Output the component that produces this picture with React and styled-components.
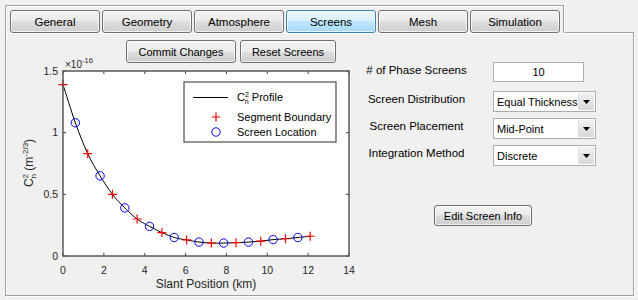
import React from "react";
import styled, { createGlobalStyle, css } from "styled-components";

const GlobalStyle = createGlobalStyle`
  html, body {
    margin: 0;
    padding: 0;
    background: #f0f0f0;
  }
  body {
    font-family: "Liberation Sans", Arial, sans-serif;
  }
`;

// profile samples, every 0.605 km (even = segment boundary, odd = screen)
const STEP = 0.605;
const PROFILE = [
  1.39, 1.08, 0.83, 0.65, 0.5, 0.39, 0.3, 0.24, 0.19, 0.15, 0.13,
  0.113, 0.105, 0.105, 0.108, 0.113, 0.12, 0.133, 0.14, 0.15, 0.16,
];

const AX = { left: 63, right: 349, top: 71, bottom: 256 };
const px = (km) => AX.left + (km * (AX.right - AX.left)) / 14;
const py = (v) => AX.bottom - (v * (AX.bottom - AX.top)) / 1.5;

const pts = PROFILE.map((v, i) => [px(i * STEP), py(v)]);

const curvePath = () => {
  let d = `M${pts[0][0]},${pts[0][1]}`;
  for (let i = 0; i < pts.length - 1; i++) {
    const p0 = pts[Math.max(i - 1, 0)];
    const p1 = pts[i];
    const p2 = pts[i + 1];
    const p3 = pts[Math.min(i + 2, pts.length - 1)];
    const c1x = p1[0] + (p2[0] - p0[0]) / 6;
    const c1y = p1[1] + (p2[1] - p0[1]) / 6;
    const c2x = p2[0] - (p3[0] - p1[0]) / 6;
    const c2y = p2[1] - (p3[1] - p1[1]) / 6;
    d += ` C${c1x},${c1y} ${c2x},${c2y} ${p2[0]},${p2[1]}`;
  }
  return d;
};

const Plus = ({ x, y }) => (
  <path d={`M${x - 4.5},${y} H${x + 4.5} M${x},${y - 4.5} V${y + 4.5}`} stroke="#ff0000" strokeWidth="1.2" />
);

const Ring = ({ x, y }) => (
  <circle cx={x} cy={y} r="4.2" fill="none" stroke="#0000ff" strokeWidth="1" />
);

const ProfileChart = () => {
  const xTicks = [0, 2, 4, 6, 8, 10, 12, 14];
  const yTicks = [0, 0.5, 1, 1.5];
  return (
    <ChartSvg width="354" height="231" viewBox="6 63 354 231">
      <rect x={AX.left} y={AX.top} width={AX.right - AX.left} height={AX.bottom - AX.top} fill="#fff" />
      <path d={curvePath()} fill="none" stroke="#000" strokeWidth="1" />
      {pts.map(([x, y], i) => (i % 2 === 0 ? <Plus key={i} x={x} y={y} /> : <Ring key={i} x={x} y={y} />))}

      {xTicks.map((t) => (
        <g key={t}>
          <path d={`M${px(t)},${AX.bottom} v-3 M${px(t)},${AX.top} v3`} stroke="#404040" strokeWidth="1" />
          <text x={px(t)} y="274" textAnchor="middle" fontSize="10.5" fill="#262626">{t}</text>
        </g>
      ))}
      {yTicks.map((t) => (
        <g key={t}>
          <path d={`M${AX.left},${py(t)} h3 M${AX.right},${py(t)} h-3`} stroke="#404040" strokeWidth="1" />
          <text x="58" y={py(t) + 3.5} textAnchor="end" fontSize="10.5" fill="#262626">{t}</text>
        </g>
      ))}
      <rect x={AX.left} y={AX.top} width={AX.right - AX.left} height={AX.bottom - AX.top} fill="none" stroke="#5a5a5a" strokeWidth="1.5" />

      <text x="65" y="68" fontSize="10" fill="#262626">
        ×10<tspan dy="-5" fontSize="7.5">-16</tspan>
      </text>

      <text transform="translate(33,163) rotate(-90)" textAnchor="middle" fontSize="12" fill="#262626">
        C<tspan dy="-5" fontSize="8">2</tspan><tspan dx="-4.5" dy="8" fontSize="8">n</tspan>
        <tspan dy="-3"> (m</tspan><tspan dy="-5" fontSize="8">-2/3</tspan><tspan dy="5">)</tspan>
      </text>

      <text x="206" y="288" textAnchor="middle" fontSize="12" fill="#262626">Slant Position (km)</text>

      <rect x="184" y="82" width="152" height="60" fill="#fff" stroke="#5a5a5a" strokeWidth="1.3" />
      <path d="M193,97.5 H228" stroke="#000" strokeWidth="1" />
      <text x="237" y="101" fontSize="11" fill="#000">
        C<tspan dy="-4" fontSize="7">2</tspan><tspan dx="-4" dy="7" fontSize="7">n</tspan>
        <tspan dy="-3"> Profile</tspan>
      </text>
      <Plus x={216} y={117} />
      <text x="237" y="121" fontSize="11" fill="#000">Segment Boundary</text>
      <Ring x={216} y={132} />
      <text x="237" y="136" fontSize="11" fill="#000">Screen Location</text>
    </ChartSvg>
  );
};

const TABS = ["General", "Geometry", "Atmosphere", "Screens", "Mesh", "Simulation"];

const FIELDS = [
  { label: "# of Phase Screens", kind: "input", value: "10", gap: 29 },
  { label: "Screen Distribution", kind: "select", value: "Equal Thickness", gap: 9 },
  { label: "Screen Placement", kind: "select", value: "Mid-Point", gap: 6 },
  { label: "Integration Method", kind: "select", value: "Discrete", gap: 6 },
];

const App = () => (
  <>
    <GlobalStyle />
    <Window>
      <TabBar>
        {TABS.map((t) => (
          <Tab key={t} $active={t === "Screens"}>{t}</Tab>
        ))}
      </TabBar>
      <Panel>
        <LeftCol>
          <ButtonRow>
            <PushButton $w={110}>Commit Changes</PushButton>
            <PushButton $w={96}>Reset Screens</PushButton>
          </ButtonRow>
          <ProfileChart />
        </LeftCol>
        <RightCol>
          {FIELDS.map((f) => (
            <FormRow key={f.label} $gap={f.gap}>
              <FieldLabel>{f.label}</FieldLabel>
              {f.kind === "input" ? (
                <TextBox>{f.value}</TextBox>
              ) : (
                <Select>
                  <SelectText>{f.value}</SelectText>
                  <DropButton>
                    <svg width="7" height="4" viewBox="0 0 7 4">
                      <path d="M0,0 H7 L3.5,4 Z" fill="#000" />
                    </svg>
                  </DropButton>
                </Select>
              )}
            </FormRow>
          ))}
          <EditRow>
            <PushButton $w={98} $h={21}>Edit Screen Info</PushButton>
          </EditRow>
        </RightCol>
      </Panel>
    </Window>
  </>
);

const etched = css`
  border: 1px solid #a0a0a0;
  box-shadow: inset 1px 1px 0 #fff, 1px 1px 0 #fff;
`;

const Window = styled.div`
  width: 638px;
  height: 300px;
  padding: 5px 0 0 5px;
  box-sizing: border-box;
  background: #f0f0f0;
  font-size: 11px;
  color: #000;
`;

const TabBar = styled.div`
  position: relative;
  z-index: 1;
  display: flex;
  gap: 2px;
  width: 559px;
  height: 28px;
  box-sizing: border-box;
  padding: 4px 2px 0 4px;
  ${etched};
  border-bottom: none;
  background: #f0f0f0;
`;

const buttonFace = css`
  box-sizing: border-box;
  display: flex;
  align-items: center;
  justify-content: center;
  border: 1px solid #707070;
  border-radius: 3px;
  font-family: "Liberation Sans", Arial, sans-serif;
  font-size: 11px;
  color: #000;
  white-space: nowrap;
  background: linear-gradient(#f2f2f2 0%, #ebebeb 50%, #dddddd 50%, #cfcfcf 100%);
  box-shadow: inset 0 0 0 1px rgba(255, 255, 255, 0.7);
`;

const Tab = styled.div`
  ${buttonFace};
  width: 90px;
  height: 23px;
  font-size: 11.5px;
  ${(p) =>
    p.$active &&
    css`
      border-color: #3c7fb1;
      background: linear-gradient(#eaf6fd 0%, #d9f0fc 50%, #bee6fd 50%, #a7d9f5 100%);
    `}
`;

const Panel = styled.div`
  display: flex;
  width: 629px;
  height: 264px;
  box-sizing: border-box;
  margin-top: -1px;
  ${etched};
`;

const LeftCol = styled.div`
  display: flex;
  flex-direction: column;
  width: 354px;
`;

const ButtonRow = styled.div`
  position: relative;
  z-index: 1;
  display: flex;
  gap: 4px;
  margin-top: 7px;
  padding-left: 120px;
`;

const PushButton = styled.div`
  ${buttonFace};
  width: ${(p) => p.$w}px;
  height: ${(p) => p.$h || 23}px;
`;

const ChartSvg = styled.svg`
  display: block;
  overflow: visible;
  font-family: "Liberation Sans", Arial, sans-serif;
`;

const RightCol = styled.div`
  display: flex;
  flex-direction: column;
  flex: 1;
`;

const FormRow = styled.div`
  display: flex;
  align-items: flex-start;
  gap: 20px;
  margin-top: ${(p) => p.$gap}px;
`;

const FieldLabel = styled.div`
  width: 113px;
  text-align: center;
  line-height: 14px;
  padding-top: 1px;
  font-size: 11.5px;
`;

const TextBox = styled.div`
  box-sizing: border-box;
  width: 91px;
  height: 20px;
  border: 1px solid #abadb3;
  background: #fff;
  display: flex;
  align-items: center;
  justify-content: center;
`;

const Select = styled.div`
  box-sizing: border-box;
  width: 103px;
  height: 21px;
  border: 1px solid #acacac;
  background: #fff;
  display: flex;
  align-items: stretch;
  padding: 1px;
`;

const SelectText = styled.div`
  flex: 1;
  display: flex;
  align-items: center;
  padding-left: 2px;
  white-space: nowrap;
  overflow: hidden;
`;

const DropButton = styled.div`
  width: 15px;
  display: flex;
  align-items: center;
  justify-content: center;
  background: linear-gradient(#f2f2f2, #d8d8d8);
  border-left: 1px solid #e0e0e0;
`;

const EditRow = styled.div`
  display: flex;
  margin-top: 39px;
  padding-left: 74px;
`;

export default App;
